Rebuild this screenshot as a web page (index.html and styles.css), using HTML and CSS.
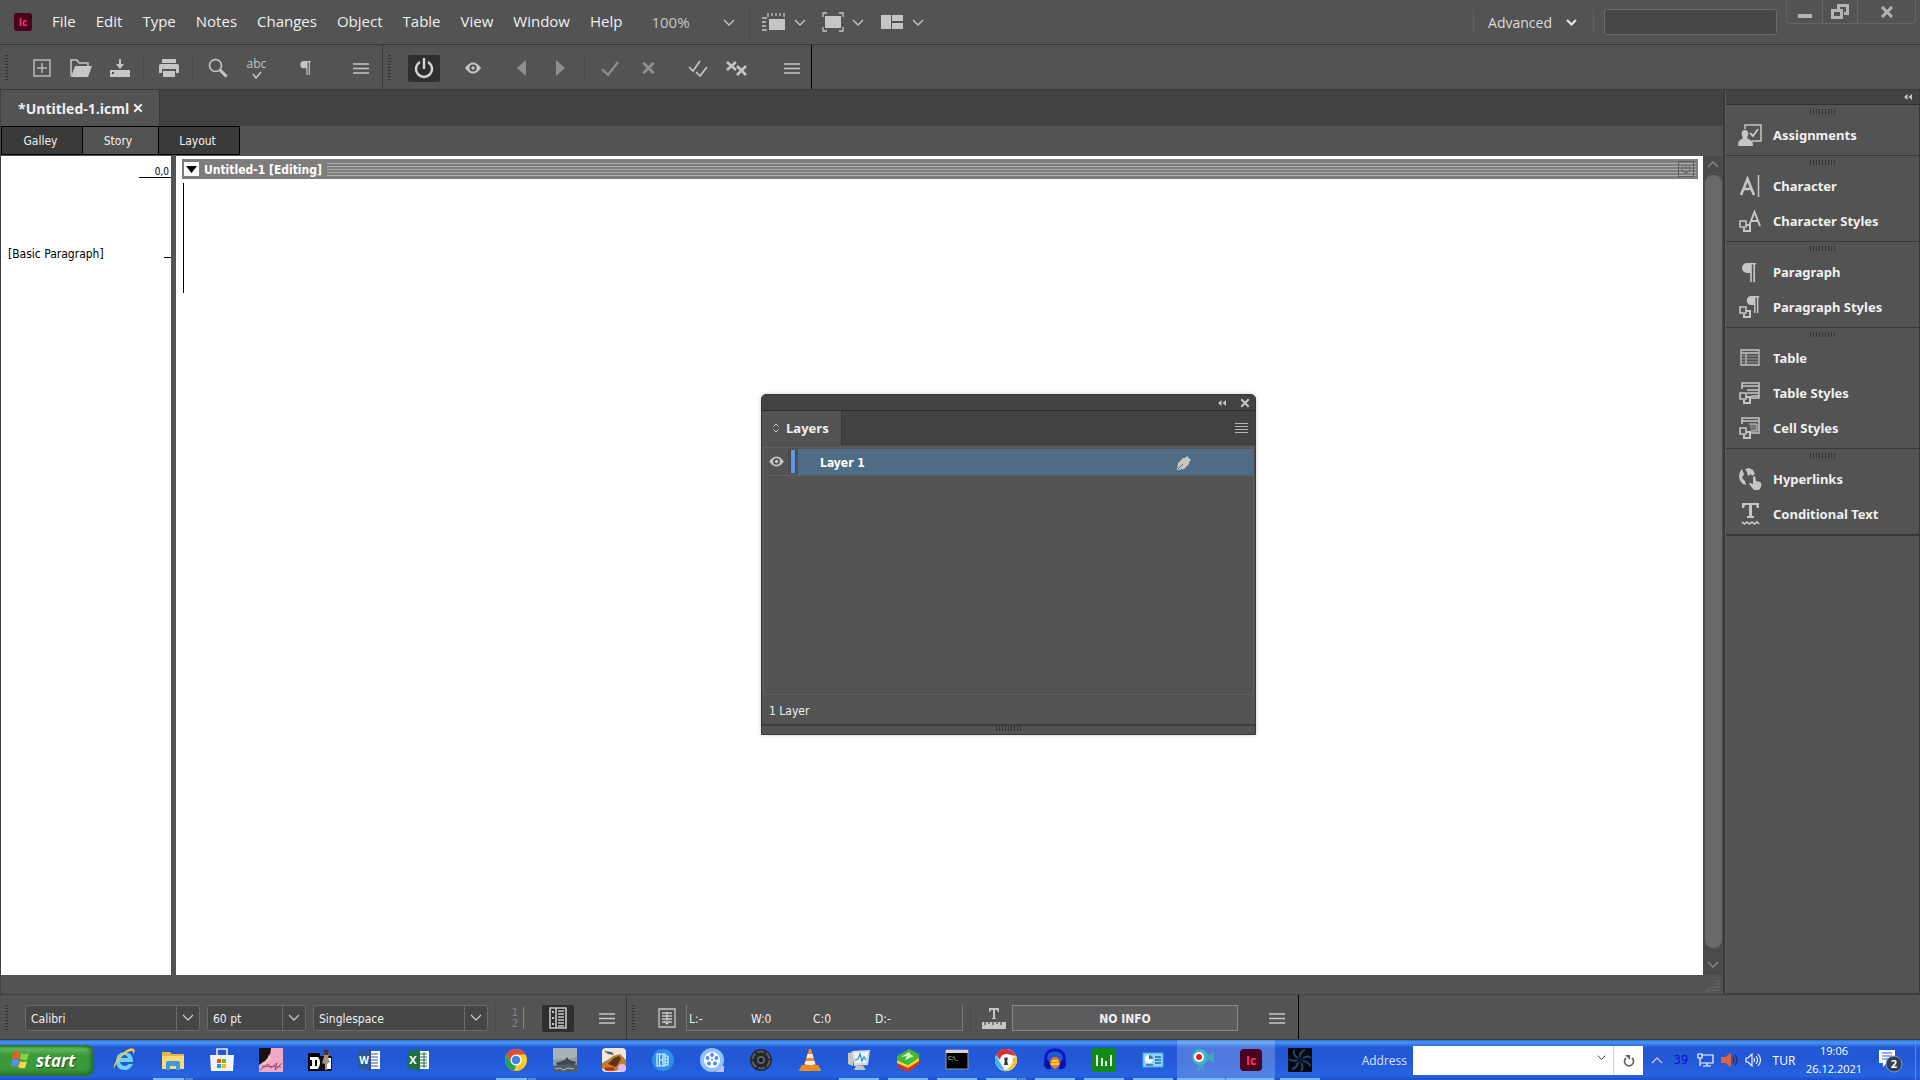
FILE: index.html
```html
<!DOCTYPE html>
<html lang="en">
<head>
    <meta charset="UTF-8">
    <meta name="viewport" content="width=device-width, initial-scale=1.0">
    <title>*Untitled-1.icml</title>
    <link rel="stylesheet" href="styles.css">
</head>
<body>
    <!-- shared icons -->
    <svg class="defs" aria-hidden="true">
        <symbol id="chevron" viewBox="0 0 12 7"><path d="M1 1l5 5 5-5" fill="none" stroke="currentColor" stroke-width="1.3"/></symbol>
        <symbol id="lines" viewBox="0 0 16 11"><path d="M0 1h16M0 5.500h16M0 10h16" fill="none" stroke="currentColor" stroke-width="1.6"/></symbol>
        <symbol id="collapse" viewBox="0 0 8 6"><path d="M3.500 0v6L0 3zM8 0v6L4.500 3z" fill="currentColor"/></symbol>
        <symbol id="cross" viewBox="0 0 12 12"><path d="M1.500 1.500l9 9M10.500 1.500l-9 9" fill="none" stroke="currentColor" stroke-width="2.4"/></symbol>
        <symbol id="eye" viewBox="0 0 16 12"><path d="M0 6Q8-5 16 6 8 17 0 6z" fill="currentColor"/><circle cx="8" cy="6" r="3.600" fill="#484848"/><circle cx="8" cy="6" r="1.800" fill="currentColor"/></symbol>
        <symbol id="squares" viewBox="0 0 12 12"><path d="M4 5h7v6H5V8" fill="none" stroke="currentColor" stroke-width="2"/><path d="M1 1h6v6H1z" fill="#535353" stroke="currentColor" stroke-width="1.6"/></symbol>
        <symbol id="pilcrow" viewBox="0 0 14 19"><path d="M5 0h9v1.600h-1V19h-1.600V1.600H9.800V19H8.200v-9H5A5 5 0 0 1 5 0z" fill="currentColor"/></symbol>
    </svg>

    <header class="menu-bar">
        <svg class="app-logo" width="18" height="18" viewBox="0 0 18 18"><rect width="18" height="18" rx="3" fill="#49021f"/><text x="9" y="13" text-anchor="middle" font-size="10" font-weight="700" fill="#ff3366">Ic</text></svg>
        <nav class="menus">
            <button>File</button>
            <button>Edit</button>
            <button>Type</button>
            <button>Notes</button>
            <button>Changes</button>
            <button>Object</button>
            <button>Table</button>
            <button>View</button>
            <button>Window</button>
            <button>Help</button>
        </nav>
        <div class="combo zoom">
            <select aria-label="Zoom level"><option>100%</option></select>
            <svg class="chevron"><use href="#chevron"/></svg>
        </div>
        <button class="view-menu" aria-label="View options">
            <svg width="24" height="20" viewBox="0 0 24 20"><path d="M7 7h16v11H7z" fill="#c6c6c6"/><path d="M6 5V1M10 4V1M14 4V1M18 4V1M22 5V1M0 6h5M0 10h4M0 14h4M0 18h5" stroke="#c6c6c6" stroke-width="1.300"/></svg>
            <svg class="chevron"><use href="#chevron"/></svg>
        </button>
        <button class="view-menu" aria-label="Screen mode">
            <svg width="22" height="20" viewBox="0 0 22 20"><path d="M3 4h16v12H3z" fill="#c6c6c6"/><path d="M1 5V1h4M17 1h4v4M21 15v4h-4M5 19H1v-4" fill="none" stroke="#c6c6c6" stroke-width="1.300"/></svg>
            <svg class="chevron"><use href="#chevron"/></svg>
        </button>
        <button class="view-menu" aria-label="Arrange documents">
            <svg width="24" height="16" viewBox="0 0 24 16"><path d="M1 1h10v14H1zM12 1h11v6H12zM12 9h11v6H12z" fill="#c6c6c6"/></svg>
            <svg class="chevron"><use href="#chevron"/></svg>
        </button>
        <button class="workspace">Advanced
            <svg width="11" height="7" viewBox="0 0 11 7"><path d="M1 1l4.500 4.500L10 1" fill="none" stroke="#e8e8e8" stroke-width="2"/></svg>
        </button>
        <input class="help-search" type="search" aria-label="Search help">
        <div class="window-buttons">
            <button aria-label="Minimize"><svg width="14" height="16" viewBox="0 0 14 16"><path d="M0 10h14v4H0z" fill="#b4b4b4"/></svg></button>
            <button aria-label="Restore"><svg width="18" height="16" viewBox="0 0 18 16"><path d="M7.500 5V1.500h9v8H13" fill="none" stroke="#b4b4b4" stroke-width="3"/><path d="M1.500 6.500h9v7h-9z" fill="#535353" stroke="#b4b4b4" stroke-width="3"/></svg></button>
            <button aria-label="Close"><svg width="14" height="12" viewBox="0 0 14 12"><path d="M2 1l10 10M12 1L2 11" stroke="#b4b4b4" stroke-width="3"/></svg></button>
        </div>
    </header>

    <div class="toolbar">
        <div class="tool-group">
            <button aria-label="New"><svg width="18" height="18" viewBox="0 0 18 18"><path d="M1 1h16v16H1zM9 4v10M4 9h10" fill="none" stroke="#b9b9b9" stroke-width="1.500"/></svg></button>
            <button aria-label="Open"><svg width="22" height="18" viewBox="0 0 22 18"><path d="M1 17V1h6l2 3h9v3" fill="none" stroke="#c6c6c6" stroke-width="1.500"/><path d="M5 7h17l-4 11H1z" fill="#c6c6c6"/></svg></button>
            <button aria-label="Save"><svg width="22" height="18" viewBox="0 0 22 18"><path d="M10 0h2v5h3l-4 5-4-5h3zM1 11h20v7H1z" fill="#c6c6c6"/><path d="M3 14h2" stroke="#535353" stroke-width="2"/></svg></button>
            <span class="sep"></span>
            <button aria-label="Print"><svg width="20" height="18" viewBox="0 0 20 18"><path d="M3 0h14v4H3zM2 5h16a2 2 0 0 1 2 2v7h-3v-4H3v4H0V7a2 2 0 0 1 2-2zM4 12h12v6H4z" fill="#c6c6c6"/></svg></button>
            <span class="sep"></span>
            <button aria-label="Find"><svg width="20" height="20" viewBox="0 0 20 20"><circle cx="7.500" cy="7.500" r="6" fill="none" stroke="#c6c6c6" stroke-width="1.600"/><path d="M12 12l6.500 6.500" stroke="#c6c6c6" stroke-width="3"/></svg></button>
            <button class="spell" aria-label="Check spelling"><span>abc</span><svg width="10" height="8" viewBox="0 0 10 8"><path d="M1 3l3 4 5-6" fill="none" stroke="#c6c6c6" stroke-width="1.600"/></svg></button>
            <button class="push" aria-label="Show hidden characters"><svg width="11" height="14"><use href="#pilcrow"/></svg></button>
            <button class="push-more" aria-label="Toolbar menu"><svg width="16" height="11"><use href="#lines"/></svg></button>
        </div>
        <div class="tool-group changes">
            <button class="pressed" aria-label="Track changes"><svg width="20" height="22" viewBox="0 0 20 22"><path d="M6 5a8 8 0 1 0 8 0M10 1v11" fill="none" stroke="#d4d4d4" stroke-width="2.400"/></svg></button>
            <button class="push" aria-label="Show changes"><svg width="16" height="12"><use href="#eye"/></svg></button>
            <button class="push dim" aria-label="Previous change"><svg width="9" height="16" viewBox="0 0 9 16"><path d="M9 0v16L0 8z" fill="currentColor"/></svg></button>
            <button class="dim" aria-label="Next change"><svg width="9" height="16" viewBox="0 0 9 16"><path d="M0 0v16l9-8z" fill="currentColor"/></svg></button>
            <span class="sep"></span>
            <button class="dim" aria-label="Accept change"><svg width="18" height="15" viewBox="0 0 18 15"><path d="M1 8l6 6L17 1" fill="none" stroke="currentColor" stroke-width="2.200"/></svg></button>
            <button class="dim" aria-label="Reject change"><svg width="15" height="14"><use href="#cross"/></svg></button>
            <button class="push" aria-label="Accept all changes"><svg width="20" height="17" viewBox="0 0 20 17"><path d="M1 7l4 4 7-10M8 12l4 4 7-9" fill="none" stroke="#c6c6c6" stroke-width="1.700"/></svg></button>
            <button aria-label="Reject all changes"><svg width="22" height="15" viewBox="0 0 22 15"><path d="M1 1l9 8M10 1L1 9M11 5l9 9M20 5l-9 9" stroke="#c6c6c6" stroke-width="2.600"/></svg></button>
            <button class="push-more" aria-label="Toolbar menu"><svg width="16" height="11"><use href="#lines"/></svg></button>
        </div>
    </div>

    <main class="workspace-area">
        <section class="document">
            <div class="doc-tabs">
                <div class="doc-tab">*Untitled-1.icml <button aria-label="Close document"><svg width="10" height="10"><use href="#cross"/></svg></button></div>
            </div>
            <div class="view-tabs">
                <button>Galley</button>
                <button class="active">Story</button>
                <button>Layout</button>
            </div>
            <div class="editor">
                <aside class="gutter">
                    <div class="ruler">0,0</div>
                    <div class="style-name">[Basic Paragraph]<span class="tick"></span></div>
                </aside>
                <article class="story">
                    <div class="story-bar">
                        <button class="fold" aria-label="Collapse story"><svg width="11" height="7" viewBox="0 0 11 7"><path d="M0 0h11L5.500 7z"/></svg></button>
                        <h2>Untitled-1 [Editing]</h2>
                        <div class="stripes"><svg width="16" height="16" viewBox="0 0 16 16"><path d="M.5.5h15v15H.5zM5 5a4 4 0 1 0 6 0M8 4v4" fill="none" stroke="#5c5c5c"/></svg></div>
                    </div>
                    <div class="caret"></div>
                </article>
                <div class="scrollbar">
                    <svg class="chevron up"><use href="#chevron"/></svg>
                    <div class="thumb"></div>
                    <svg class="chevron"><use href="#chevron"/></svg>
                </div>
            </div>
            <div class="doc-status">
                <svg width="14" height="13" viewBox="0 0 14 13"><path d="M12.500 1v12M9.500 4v9M6.500 7v6M3.500 9v4M.5 11v2" stroke="#666" stroke-width="2" stroke-dasharray="2 1"/></svg>
            </div>

            <section class="layers-window">
                <div class="layers-title">
                    <button aria-label="Collapse"><svg width="8" height="6"><use href="#collapse"/></svg></button>
                    <button aria-label="Close"><svg width="10" height="10"><use href="#cross"/></svg></button>
                </div>
                <div class="layers-tabs">
                    <button class="layers-tab"><svg width="6" height="10" viewBox="0 0 6 10"><path d="M.5 3.500L3 1l2.500 2.500M.5 6.500L3 9l2.500-2.500" fill="none" stroke="#c6c6c6"/></svg>Layers</button>
                    <button class="layers-menu" aria-label="Panel menu"><svg width="13" height="10" viewBox="0 0 13 10"><path d="M0 .5h13M0 3.500h13M0 6.500h13M0 9.500h13" stroke="#b4b4b4" stroke-width="1.200"/></svg></button>
                </div>
                <div class="layers-list">
                    <div class="layer">
                        <button aria-label="Toggle visibility"><svg width="15" height="11"><use href="#eye"/></svg></button>
                        <span class="layer-color"></span>
                        <div class="layer-name">Layer 1
                            <svg width="14" height="14" viewBox="0 0 14 14"><path d="M0 14l1-7 5-5 2 0 2-2 4 4-2 2 0 2-5 5z" fill="#c6c6c6"/><path d="M1 13l5-5" stroke="#506b84"/></svg>
                        </div>
                    </div>
                </div>
                <div class="layers-count">1 Layer</div>
                <div class="layers-resize"><span class="grip"></span></div>
            </section>
        </section>

        <aside class="dock">
            <div class="dock-top"><button aria-label="Expand panels"><svg width="8" height="6"><use href="#collapse"/></svg></button></div>
            <div class="dock-group">
                <span class="grip"></span>
                <button><svg width="24" height="22" viewBox="0 0 24 22"><path d="M7 5V1h16v16h-9" fill="none" stroke="#c6c6c6" stroke-width="1.500"/><path d="M12 9l3 3 5-7" fill="none" stroke="#c6c6c6" stroke-width="1.800"/><path d="M7 6c4 0 4 5 2 8l5 3q1 2 1 5H0q0-4 1-5l4-3C3 11 3 6 7 6z" fill="#c6c6c6"/></svg>Assignments</button>
            </div>
            <div class="dock-group">
                <span class="grip"></span>
                <button><svg width="24" height="22" viewBox="0 0 24 22"><path d="M3 20L9.500 4 16 20M5.500 14h8" fill="none" stroke="#c6c6c6" stroke-width="2.600"/><path d="M20.500 0v22" stroke="#c6c6c6" stroke-width="1.500"/></svg>Character</button>
                <button><svg width="24" height="22" viewBox="0 0 24 22"><path d="M11 16l5.500-14L22 16M13 11h7" fill="none" stroke="#c6c6c6" stroke-width="2"/><use href="#squares" x="1" y="10" width="12" height="12"/></svg>Character Styles</button>
            </div>
            <div class="dock-group">
                <span class="grip"></span>
                <button><svg width="24" height="22" viewBox="0 0 24 22"><use href="#pilcrow" x="4" y="2" width="14" height="19"/></svg>Paragraph</button>
                <button><svg width="24" height="22" viewBox="0 0 24 22"><use href="#pilcrow" x="8" y="0" width="14" height="17"/><use href="#squares" x="1" y="10" width="12" height="12"/></svg>Paragraph Styles</button>
            </div>
            <div class="dock-group">
                <span class="grip"></span>
                <button><svg width="24" height="22" viewBox="0 0 24 22"><path d="M3 3h18v15H3zM3 6h18M8 6v12" fill="none" stroke="#c6c6c6" stroke-width="1.300"/><path d="M4 9h16M4 12h16M4 15h16" stroke="#969696"/></svg>Table</button>
                <button><svg width="24" height="22" viewBox="0 0 24 22"><path d="M4 7V1h17v15h-8M4 4h17M9 8h12M9 11h12M13 14h8" fill="none" stroke="#c6c6c6" stroke-width="1.500"/><use href="#squares" x="1" y="10" width="12" height="12"/></svg>Table Styles</button>
                <button><svg width="24" height="22" viewBox="0 0 24 22"><path d="M4 7V1h17v15h-8M4 4h17" fill="none" stroke="#c6c6c6" stroke-width="1.500"/><path d="M11 7h8v7h-6" fill="#777" stroke="#c6c6c6"/><use href="#squares" x="1" y="10" width="12" height="12"/></svg>Cell Styles</button>
            </div>
            <div class="dock-group">
                <span class="grip"></span>
                <button><svg width="24" height="22" viewBox="0 0 24 22"><path d="M4 1C0 5 0 12 5 16l3 1-1-4-3-3 2-4zM7 1l4-1 4 2 2 4-3 2-1-2-3 2-1-4z" fill="#c6c6c6"/><path d="M15 9l2-1 1 5 4 1q2 1 1 5l-2 3h-5l-5-6 1-1 3 1z" fill="#c6c6c6"/></svg>Hyperlinks</button>
                <button><svg width="24" height="24" viewBox="0 0 24 24"><path d="M4 1h17v5h-2l-1-3h-4v11h2v2H9v-2h2V3H7L6 6H4z" fill="#c6c6c6"/><path d="M4 20l2.500 2L9 20l2.500 2 2.500-2 2.500 2 2.500-2 2 2" fill="none" stroke="#c6c6c6" stroke-width="1.700"/></svg>Conditional Text</button>
            </div>
        </aside>
    </main>

    <footer class="toolbar bottom">
        <div class="tool-group">
            <div class="combo wide"><select aria-label="Font"><option>Calibri</option></select><svg class="chevron"><use href="#chevron"/></svg></div>
            <div class="combo"><select aria-label="Font size"><option>60 pt</option></select><svg class="chevron"><use href="#chevron"/></svg></div>
            <div class="combo wide"><select aria-label="Line spacing"><option>Singlespace</option></select><svg class="chevron"><use href="#chevron"/></svg></div>
            <span class="sep"></span>
            <button class="line-numbers" aria-label="Line numbers"><span>1<br>2</span></button>
            <button class="pressed" aria-label="Show style names"><svg width="18" height="22" viewBox="0 0 18 22"><path d="M1 1h16v20H1zM7 1v20" fill="none" stroke="#c6c6c6" stroke-width="1.600"/><path d="M3 5h2M3 11h2M3 17h2" stroke="#c6c6c6" stroke-width="2"/><path d="M9 4h6M9 7h6M9 10h6M9 13h6M9 16h6M9 19h6" stroke="#c6c6c6" stroke-width="1.500"/></svg></button>
            <button class="push" aria-label="Toolbar menu"><svg width="16" height="11"><use href="#lines"/></svg></button>
        </div>
        <div class="tool-group info">
            <button aria-label="Copyfit info"><svg width="18" height="20" viewBox="0 0 18 20"><path d="M1 1h16v18H1zM4 5h10M4 8h10M4 11h10M4 14h3M11 14h3M9 4v12M6 13l3 3 3-3" fill="none" stroke="#c6c6c6" stroke-width="1.300"/></svg></button>
            <div class="counts"><span>L:-</span><span>W:0</span><span>C:0</span><span>D:-</span></div>
            <span class="sep"></span>
            <button aria-label="Copyfit ruler"><svg width="24" height="21" viewBox="0 0 24 21"><path d="M7 0h10v4h-1l-1-2h-2v8h1v1h-4v-1h1V2H9L8 4H7zM0 14h24v7H0z" fill="#c6c6c6"/><path d="M3 14v3M7 14v2M11 14v3M15 14v2M19 14v3" stroke="#535353" stroke-width="1.300"/></svg></button>
            <output class="no-info">NO INFO</output>
            <button class="last" aria-label="Toolbar menu"><svg width="16" height="11"><use href="#lines"/></svg></button>
        </div>
    </footer>

    <div class="taskbar">
        <button class="start"><svg width="20" height="20" viewBox="0 0 20 20"><path d="M2 3q4-3 7-1L8 9Q5 7 1 9z" fill="#f1592a"/><path d="M10 3q4 2 8 0l-2 7q-4 1-7-1z" fill="#8ccf3f"/><path d="M1 10q3-2 7 0l-2 7q-3-2-6 0z" fill="#5b8df0"/><path d="M9 11q3 2 7 0l-2 7q-4 1-7-1z" fill="#ffd34a"/></svg>start</button>
        <div class="apps">
            <button aria-label="Internet Explorer"><svg viewBox="0 0 24 24"><path d="M21 14H8q1 4 5 4 2 0 4-2h4q-3 6-8 6-9 0-9-9 0-8 8-9 9 0 9 10zM8 10h8q-1-3-4-3t-4 3z" fill="#6fd1fb"/><path d="M3 23Q-1 18 8 8T22 1q2 2-1 6 1-4-1-4-6 0-13 9T3 23z" fill="#f6c937"/></svg></button>
            <button class="running stacked" aria-label="File Explorer"><svg viewBox="0 0 24 24"><path d="M1 4h8l2 2h12v15H1z" fill="#e9b544"/><path d="M1 8h22v13H1z" fill="#fcd978"/><path d="M5 22v-7q0-2 2-2h10q2 0 2 2v7h-4v-4H9v4z" fill="#3b9ade"/></svg></button>
            <button aria-label="Store"><svg viewBox="0 0 24 24"><path d="M7 7V1h10v6" fill="none" stroke="#e8eefc" stroke-width="1.600"/><path d="M0 7h24l-1 16H1z" fill="#f4f4f4"/><path d="M7 11h4v4H7z" fill="#f25022"/><path d="M12 11h4v4h-4z" fill="#7fba00"/><path d="M7 16h4v4H7z" fill="#00a4ef"/><path d="M12 16h4v4h-4z" fill="#ffb900"/></svg></button>
            <button aria-label="Photo editor"><svg viewBox="0 0 24 24"><path d="M0 0h24v24H0z" fill="#eda9c6"/><path d="M0 0h12l-1 7-5 6-6 4z" fill="#1a1113"/><path d="M10 6l-2 7-4 1-3 4 6-2 5-6z" fill="#f4c6b0"/><path d="M1 22l8-6 3 4 6-5-2 7 7-7M3 18l19 1" fill="none" stroke="#9d4a70"/></svg></button>
            <button aria-label="Game"><svg viewBox="0 0 24 24"><path d="M0 5h12v18H0z" fill="#000"/><path d="M12 8h12v15H12z" fill="#111"/><path d="M2 9h8q4 5 0 12H2v-3h2v-6H2zM7 12v6h2v-6z" fill="#fff"/><path d="M19 10h4v11h-4z" fill="#fff"/><path d="M15 3l4-2 2 4-1 5 2 4-3 2v6h-2v-6l-3-1 2-6z" fill="#b19084"/><path d="M15 3q2-4 6 0l-1 4h-4z" fill="#4b332d"/></svg></button>
            <button aria-label="Word"><svg viewBox="0 0 24 24"><path d="M12 3h11v18H12z" fill="#fff"/><path d="M13 6h8M13 9h8M13 12h8M13 15h8M13 18h8" stroke="#2b579a"/><path d="M1 4l13-3v22L1 20z" fill="#2b579a"/><text x="7" y="16" text-anchor="middle" font-size="10" font-weight="700" fill="#fff">W</text></svg></button>
            <button aria-label="Excel"><svg viewBox="0 0 24 24"><path d="M12 3h11v18H12z" fill="#fff"/><path d="M13 6h8M13 9h8M13 12h8M13 15h8M13 18h8M18 4v16" stroke="#217346"/><path d="M1 4l13-3v22L1 20z" fill="#1e7145"/><text x="7" y="16" text-anchor="middle" font-size="11" font-weight="700" fill="#fff">X</text></svg></button>
            <span class="app-gap"></span>
            <button class="running stacked" aria-label="Chrome"><svg viewBox="0 0 24 24"><circle cx="12" cy="12" r="11" fill="#fbcb2b"/><path d="M2.500 6.500A11 11 0 0 1 21.500 6.500H12L7 14z" fill="#de4a3a"/><path d="M2.500 6.500l5.500 9 4 2-2 5.500A11 11 0 0 1 2.500 6.500z" fill="#2aa053"/><circle cx="12" cy="12" r="5.500" fill="#fff"/><circle cx="12" cy="12" r="4.300" fill="#4284f3"/></svg></button>
            <button aria-label="Warship game"><svg viewBox="0 0 24 24"><path d="M0 0h24v24H0z" fill="#8c9ba5"/><path d="M0 0h24v9q-12 3-24 2z" fill="#a7b2b8"/><path d="M3 15l9-3 2-3 2 3 7 2-2 4H5z" fill="#41464a"/><path d="M0 18q12-3 24-1v7H0z" fill="#4b5d69"/><path d="M2 21l5-1 3 2 5-2 6 1" stroke="#b0bcc4" fill="none"/></svg></button>
            <button aria-label="War game"><svg viewBox="0 0 24 24"><rect width="24" height="24" rx="4" fill="#f1e7d8"/><path d="M0 15q8-4 11-7l7-2 6 6v7q-8 5-19 4L0 20z" fill="#c27a35"/><path d="M6 16l6-6 5-2 2 3-5 8z" fill="#5b3414"/><path d="M2 3l8 1 2 3-6-1z" fill="#526070"/><path d="M3 21h9" stroke="#c32917" stroke-width="3"/><circle cx="20" cy="20" r="4" fill="#e0b8f4"/></svg></button>
            <button aria-label="Movies"><svg viewBox="0 0 24 24"><circle cx="12" cy="12" r="11" fill="#2c8fe9"/><path d="M6 6h8v12H6zM8.500 6v12M12 6v12M8.500 12H12M14 8h3v9h-3M14 11h3M14 14h3" fill="none" stroke="#e6f4ff" stroke-width="1.200"/></svg></button>
            <button aria-label="Video player"><svg viewBox="0 0 24 24"><path d="M16 18h8v6h-8z" fill="#bcc1ff"/><circle cx="12" cy="12" r="12" fill="#8fc1fc"/><circle cx="12" cy="12" r="8" fill="#fff"/><g fill="#4d8cf0"><circle cx="12" cy="7" r="2"/><circle cx="7.500" cy="10" r="2"/><circle cx="16.500" cy="10" r="2"/><circle cx="9" cy="15.500" r="2"/><circle cx="15" cy="15.500" r="2"/><circle cx="12" cy="11.500" r="1"/></g></svg></button>
            <button aria-label="Sound"><svg viewBox="0 0 24 24"><circle cx="12" cy="12" r="11" fill="#23272d"/><circle cx="12" cy="12" r="8.500" fill="none" stroke="#555b63" stroke-width="2" stroke-dasharray="7 2"/><circle cx="12" cy="12" r="4" fill="#596069"/><circle cx="12" cy="12" r="2" fill="#111"/></svg></button>
            <button aria-label="VLC"><svg viewBox="0 0 24 24"><path d="M4 17h16l3 5q0 1-1 1H2q-1 0-1-1z" fill="#f08a1c"/><path d="M11 1h2l5 17q-6 3-12 0z" fill="#f48b1d"/><path d="M9.500 6h5l1 4h-7zM7.500 13h9l1 3q-5 2-11 0z" fill="#eee"/></svg></button>
            <button class="running" aria-label="System monitor"><svg viewBox="0 0 24 24"><path d="M1 5l5-1v14l-5-2z" fill="#c9c7bd"/><path d="M5 3l18-1-2 15-14 1z" fill="#d9dadb"/><path d="M7 5l14-1-2 11H8z" fill="#e8f7ff"/><path d="M8 12l3-1 2-5 2 7 2-4 2 3" fill="none" stroke="#2f8fc3" stroke-width="1.300"/><path d="M9 18h7l3 4H7z" fill="#c4c5c7"/></svg></button>
            <button class="running" aria-label="BlueStacks"><svg viewBox="0 0 24 24"><path d="M1 15l11 5 11-8v4l-11 8-11-5z" fill="#d92f27"/><path d="M1 12l11 5 11-8v4l-11 7-11-5z" fill="#f6d52b"/><path d="M1 8L13 1l10 5v4l-11 7-11-5z" fill="#45b933"/><path d="M5 9l8-5 2 3 3 1-9 4 2-4z" fill="#d8f5cf"/></svg></button>
            <button class="running" aria-label="Command prompt"><svg viewBox="0 0 24 24"><path d="M1 2h22v19H1z" fill="#000" stroke="#9b9b9b"/><path d="M1 2h22v3H1z" fill="#d6d6d6"/><text x="3" y="12" font-size="6" fill="#fff">C:\_</text></svg></button>
            <button class="running stacked" aria-label="Browser"><svg viewBox="0 0 24 24"><circle cx="12" cy="12" r="11" fill="#f2f2f2"/><path d="M2 7A11 11 0 0 1 22 8l-9-2-7 6z" fill="#d93030"/><path d="M22 8q3 8-4 13-4 3-8 2 9-3 9-13z" fill="#f2c230"/><path d="M2 7q-3 9 3 13l6 3-6-10z" fill="#46b1ed"/><circle cx="12" cy="12" r="6" fill="#fff"/><path d="M11 12h2l1 5h-4z" fill="#333"/><circle cx="12" cy="11" r="1.800" fill="#333"/></svg></button>
            <button class="running" aria-label="Audacity"><svg viewBox="0 0 24 24"><path d="M7 17q0-8 5-8t5 8l-5 4z" fill="#f77d14"/><path d="M8 16h8M9 13h6" stroke="#ffdb3a" stroke-width="2"/><path d="M3 15Q1 2 12 2t9 13" fill="none" stroke="#0c14c8" stroke-width="3"/><path d="M2 12q5-2 6 9-6 1-7-4zM22 12q-5-2-6 9 6 1 7-4z" fill="#0a0fae"/></svg></button>
            <button class="running" aria-label="Equalizer"><svg viewBox="0 0 24 24"><rect width="24" height="24" rx="3" fill="#118a1a"/><path d="M5 7v11M10 10v8M14 13v5M19 7v11" stroke="#e7ffe7" stroke-width="2"/></svg></button>
            <button class="running" aria-label="Control panel"><svg viewBox="0 0 24 24"><path d="M2 5h20v14H2z" fill="#8fd4fa" stroke="#48a7df"/><circle cx="8" cy="11" r="4" fill="#f3fbff"/><path d="M8 11V7a4 4 0 0 1 4 4z" fill="#2683c9"/><path d="M14 9h6M14 12h6M14 15h6M5 17h7" stroke="#236ba5" stroke-width="1.500"/></svg></button>
            <button class="running active" aria-label="Screen recorder"><svg viewBox="0 0 24 24"><circle cx="10" cy="9" r="8" fill="#41b5c2"/><path d="M16 8l8-4v11l-8-4zM9 17h3l3 6h-2l-2-4-2 4H7z" fill="#41a8bd"/><circle cx="9" cy="9" r="5" fill="#fff"/><circle cx="9" cy="9" r="3" fill="#e2231a"/></svg></button>
            <button class="running active" aria-label="InCopy"><svg viewBox="0 0 24 24"><rect x="1" y="1" width="22" height="22" rx="4" fill="#49021f"/><text x="12" y="17" text-anchor="middle" font-size="12" font-weight="700" fill="#ff3366">Ic</text></svg></button>
            <button class="running" aria-label="Fan control"><svg viewBox="0 0 24 24"><path d="M0 0h24v24H0z" fill="#05080e"/><g fill="none" stroke="#23436e" stroke-width="2"><path d="M12 9q0-6 5-7M15 10q5-3 8 0M15 13q6 1 7 5M13 15q3 4 0 8M10 14q-1 6-6 7M9 12q-5 2-8-1M10 10Q5 8 6 2"/></g><circle cx="12" cy="12" r="3" fill="#101a29"/></svg></button>
        </div>
        <label class="address-label" for="address">Address</label>
        <div class="address">
            <input id="address" type="text">
            <svg class="chevron"><use href="#chevron"/></svg>
            <button aria-label="Refresh"><svg width="12" height="13" viewBox="0 0 12 13"><path d="M3 4a4.500 4.500 0 1 0 6 0" fill="none" stroke="#666" stroke-width="1.700"/><path d="M2 1h5v5z" fill="#666"/></svg></button>
        </div>
        <div class="tray">
            <button aria-label="Show hidden icons"><svg class="chevron up"><use href="#chevron"/></svg></button>
            <span class="temp">39</span>
            <button aria-label="Network"><svg width="17" height="14" viewBox="0 0 17 14"><path d="M5 2h11v8H4M10 10v3M6 13h8M1 1h4v4H1zM3 5v8" fill="none" stroke="#fff" stroke-width="1.200"/></svg></button>
            <button aria-label="Audio manager"><svg width="17" height="14" viewBox="0 0 17 14"><path d="M0 4h4l6-4v14l-6-4H0z" fill="#e2633b"/><path d="M12 4q2 3 0 6M14 2q4 5 0 10" fill="none" stroke="#342c51" stroke-width="1.300"/></svg></button>
            <button aria-label="Volume"><svg width="17" height="14" viewBox="0 0 17 14"><path d="M1 5h2l4-4v12L3 9H1zM9 5q1 2 0 4M11 3q3 4 0 8M13 1q5 6 0 12" fill="none" stroke="#fff" stroke-width="1.100"/></svg></button>
            <button class="lang">TUR</button>
            <button class="clock">19:06<br>26.12.2021</button>
            <button class="notices" aria-label="Notifications"><svg width="26" height="26" viewBox="0 0 26 26"><path d="M2 3h16v13h-8l-4 4v-4H2z" fill="#fff"/><path d="M5 6h10M5 9h10M5 12h7" stroke="#245edb"/><circle cx="17" cy="17" r="8" fill="#2f3e5c" stroke="#8796b8"/><text x="17" y="21" text-anchor="middle" font-size="11" font-weight="700" fill="#fff">2</text></svg></button>
        </div>
    </div>
</body>
</html>
```
FILE: styles.css
```css
* {
    box-sizing: border-box;
}
body {
    margin: 0;
    height: 100vh;
    display: flex;
    flex-direction: column;
    background-color: #535353;
    color: #f0f0f0;
    font-family: "DejaVu Sans Condensed", "DejaVu Sans", sans-serif;
    font-size: 12px;
    overflow: hidden;
}
button, select, input {
    font: inherit;
    color: inherit;
    background: none;
    border: none;
    border-radius: 0;
    padding: 0;
    margin: 0;
}
button {
    display: flex;
    align-items: center;
    justify-content: center;
    color: #c6c6c6;
}
svg {
    display: block;
    flex: none;
}
svg text {
    font-family: "Open Sans", sans-serif;
}
.defs {
    position: absolute;
    width: 0;
    height: 0;
}
.chevron {
    width: 12px;
    height: 7px;
    color: #c6c6c6;
}
.chevron.up {
    transform: rotate(180deg);
}

/* menu bar */
.menu-bar {
    display: flex;
    align-items: center;
    height: 45px;
    flex: none;
    padding-left: 14px;
    border-bottom: 1px solid #383838;
    font-family: "Open Sans", sans-serif;
    font-size: 15px;
}
.menus {
    display: flex;
    gap: 20px;
    margin-left: 20px;
    padding-bottom: 2px;
}
.menus button {
    color: #f0f0f0;
}
.combo {
    position: relative;
    width: 99px;
    height: 26px;
}
.combo select {
    appearance: none;
    width: 100%;
    height: 100%;
    padding: 2px 30px 0 5px;
    border: 1px solid #6b6b6b;
    border-radius: 3px;
    background: linear-gradient(#6b6b6b, #6b6b6b) right 22px top / 1px 100% no-repeat #464646;
}
.combo .chevron {
    position: absolute;
    right: 6px;
    top: 9px;
    pointer-events: none;
}
.combo.wide {
    width: 175px;
}
.combo.zoom {
    width: 104px;
    height: 36px;
    margin: 0 12px 0 24px;
    border-right: 1px solid #4a4a4a;
    color: #c6c6c6;
}
.combo.zoom select {
    padding-top: 0;
    border: none;
    background: none;
}
.combo.zoom .chevron {
    right: 14px;
    top: 15px;
}
.view-menu {
    gap: 8px;
    margin-right: 16px;
}
.workspace {
    gap: 14px;
    height: 24px;
    margin-left: auto;
    padding: 0 16px 0 14px;
    border: solid #626262;
    border-width: 0 1px;
    font-size: 14px;
    color: #dcdcdc;
}
.help-search {
    width: 173px;
    height: 26px;
    margin: 0 9px 0 10px;
    border: 1px solid #6b6b6b;
    border-radius: 3px;
    background-color: #464646;
}
.window-buttons {
    display: flex;
    align-self: flex-start;
    height: 24px;
    margin-right: 4px;
    border: 1px solid #656565;
    border-top: none;
    border-radius: 0 0 4px 4px;
}
.window-buttons button {
    width: 35px;
}
.window-buttons button + button {
    border-left: 1px solid #656565;
}
.window-buttons button:last-child {
    width: 58px;
}

/* tool bars */
.toolbar {
    display: flex;
    height: 45px;
    flex: none;
    border-bottom: 1px solid #383838;
}
.tool-group {
    position: relative;
    display: flex;
    align-items: center;
    padding: 2px 2px 0 22px;
    border-right: 1px solid #383838;
}
.tool-group::before {
    content: "";
    position: absolute;
    left: 5px;
    top: 10px;
    width: 3px;
    height: 25px;
    background: repeating-linear-gradient(#333 0 1px, transparent 1px 3px);
}
.tool-group button {
    width: 39px;
    height: 30px;
}
.tool-group .sep {
    width: 1px;
    height: 30px;
    margin: 0 5px 0 4px;
    background-color: #4b4b4b;
}
.tool-group .push {
    margin-left: 10px;
}
.tool-group .push-more {
    margin-left: 16px;
}
.tool-group .dim {
    color: #8e8e8e;
}
.tool-group .pressed {
    width: 32px;
    margin: 0 3px;
    height: 27px;
    border-radius: 2px;
    background-color: #2f2f2f;
}
.tool-group .spell {
    flex-direction: column;
    line-height: 14px;
    font-family: "Open Sans", sans-serif;
}
.tool-group.changes {
    padding-right: 0;
    border-right-color: #000;
}
.bottom {
    height: 46px;
    border-top: 1px solid #404040;
}
.bottom .tool-group {
    padding: 2px 0 0 25px;
}
.bottom .combo {
    margin-right: 7px;
}
.bottom .tool-group .sep {
    margin-left: 0;
}
.bottom .line-numbers {
    width: 34px;
    margin-right: 4px;
    font-size: 11px;
    line-height: 11px;
    color: #858585;
}
.line-numbers span {
    padding-right: 5px;
    border-right: 1px solid #858585;
}
.bottom .info {
    padding-left: 20px;
    border-right-color: #000;
}
.counts {
    display: flex;
    width: 277px;
    height: 26px;
    padding: 2px 0 0 2px;
    align-items: center;
    border: 1px solid #7a7a7a;
    border-top: none;
}
.counts span {
    width: 62px;
}
.bottom .info .sep {
    margin: 0 3px 0 7px;
}
.no-info {
    width: 226px;
    height: 26px;
    margin-left: -1px;
    border: 1px solid #8a8a8a;
    background-color: #5c5c5c;
    font-weight: bold;
    text-align: center;
    line-height: 27px;
}
.bottom .last {
    margin: 0 2px 0 19px;
}

/* document */
.workspace-area {
    display: flex;
    flex: 1;
    min-height: 0;
}
.document {
    position: relative;
    display: flex;
    flex-direction: column;
    flex: 1;
    border-right: 2px solid #3a3a3a;
    border-left: 1px solid #424242;
}
.doc-tabs {
    display: flex;
    height: 36px;
    background-color: #424242;
}
.doc-tab {
    display: flex;
    align-items: center;
    gap: 4px;
    padding: 0 16px 0 17px;
    border-right: 1px solid #383838;
    background-color: #535353;
    font-family: "Open Sans", sans-serif;
    font-size: 14px;
    font-weight: bold;
}
.doc-tab button {
    color: #f0f0f0;
}
.view-tabs {
    display: flex;
    height: 30px;
    padding-bottom: 1px;
}
.view-tabs button {
    width: 82px;
    padding-right: 3px;
    border: 1px solid #000;
    background-color: #3a3a3a;
    color: #f0f0f0;
}
.view-tabs .active {
    width: 75px;
    padding-right: 5px;
    border-width: 1px 0;
    background-color: #535353;
}
.editor {
    display: flex;
    flex: 1;
}
.gutter {
    width: 170px;
    background-color: #fff;
    color: #000;
}
.ruler {
    width: 32px;
    height: 22px;
    margin-left: auto;
    padding: 10px 2px 0 0;
    border-bottom: 1px solid #000;
    font-size: 10px;
    line-height: 12px;
    text-align: right;
}
.style-name {
    display: flex;
    justify-content: space-between;
    align-items: center;
    height: 20px;
    margin-top: 66px;
    padding-left: 7px;
}
.tick {
    width: 7px;
    height: 1px;
    margin-top: 7px;
    background-color: #000;
}
.story {
    flex: 1;
    margin-left: 5px;
    padding: 3px 5px 0 6px;
    background-color: #fff;
}
.story-bar {
    display: flex;
    align-items: center;
    height: 20px;
    padding: 0 2px;
    background-color: #7d7d7d;
}
.fold {
    width: 15px;
    height: 14px;
    background-color: #fff;
}
.story-bar h2 {
    margin: 0 5px;
    padding-top: 2px;
    font-size: 12px;
    color: #fff;
}
.stripes {
    display: flex;
    flex: 1;
    height: 16px;
    justify-content: flex-end;
    padding-right: 2px;
    background: repeating-linear-gradient(#7d7d7d 0 2px, #adadad 2px 3px);
}
.caret {
    width: 1px;
    height: 110px;
    margin: 4px 0 0 1px;
    background-color: #000;
}
.scrollbar {
    display: flex;
    flex-direction: column;
    align-items: center;
    justify-content: space-between;
    width: 20px;
    padding: 5px 0 7px;
    background-color: #4a4a4a;
}
.scrollbar .chevron {
    color: #8a8a8a;
}
.thumb {
    flex: 1;
    width: 17px;
    margin: 7px 0 13px;
    border-radius: 8px;
    background-color: #696969;
}
.doc-status {
    display: flex;
    justify-content: flex-end;
    height: 19px;
    padding: 4px 3px 0 0;
}

/* floating layers window */
.layers-window {
    position: absolute;
    left: 760px;
    top: 304px;
    width: 495px;
    height: 341px;
    display: flex;
    flex-direction: column;
    border: 1px solid #383838;
    border-radius: 5px 5px 0 0;
    background-color: #535353;
    box-shadow: 0 0 4px rgba(0,0,0,0.2);
}
.layers-title {
    display: flex;
    justify-content: flex-end;
    gap: 14px;
    height: 16px;
    padding-right: 5px;
    border-bottom: 1px solid #2e2e2e;
    border-radius: 4px 4px 0 0;
    background-color: #424242;
}
.layers-tabs {
    display: flex;
    justify-content: space-between;
    height: 34px;
    border-bottom: 1px solid #383838;
    background-color: #424242;
}
.layers-tab {
    gap: 7px;
    margin-bottom: -1px;
    padding: 0 12px 0 11px;
    border-right: 1px solid #383838;
    background-color: #535353;
    font-family: "Open Sans", sans-serif;
    font-size: 13px;
    font-weight: bold;
    color: #f0f0f0;
}
.layers-menu {
    margin-right: 7px;
}
.layers-list {
    flex: 1;
    margin: 2px 1px 0;
    border: 1px solid #5e5e5e;
}
.layer {
    display: flex;
    height: 28px;
    border-bottom: 1px solid #5e5e5e;
}
.layer button {
    width: 25px;
    border-right: 1px solid #4a4a4a;
}
.layer-color {
    width: 6px;
    margin: 2px 2px 2px 1px;
    border: solid #444;
    border-width: 0 1px;
    background-color: #5c99ea;
}
.layer-name {
    display: flex;
    flex: 1;
    align-items: center;
    justify-content: space-between;
    margin-top: 1px;
    padding: 2px 62px 0 22px;
    background-color: #506b84;
    font-weight: bold;
    color: #fff;
}
.layers-count {
    height: 29px;
    padding: 2px 0 0 7px;
    line-height: 28px;
}
.layers-resize {
    height: 10px;
    border-top: 2px solid #3d3d3d;
}
.grip {
    display: block;
    width: 25px;
    height: 5px;
    margin: 0 auto;
    background: repeating-linear-gradient(90deg, #333 0 1px, transparent 1px 3px);
}

/* panel dock */
.dock {
    width: 195px;
    border-left: 1px solid #5a5a5a;
    border-right: 1px solid #383838;
    border-bottom: 1px solid #383838;
}
.dock-top {
    display: flex;
    justify-content: flex-end;
    height: 15px;
    padding-right: 7px;
    border-bottom: 1px solid #2e2e2e;
    background-color: #424242;
}
.dock-group {
    padding: 4px 0 3px;
    border-bottom: 1px solid #383838;
}
.dock-group:last-child {
    border-bottom-width: 2px;
}
.dock-group .grip {
    margin-bottom: 3px;
}
.dock-group button {
    width: 100%;
    height: 35px;
    justify-content: flex-start;
    gap: 11px;
    padding-left: 12px;
    font-family: "Noto Sans", sans-serif;
    font-size: 13px;
    font-weight: bold;
    color: #f0f0f0;
}
.dock-group svg {
    color: #c6c6c6;
}

/* task bar */
.taskbar {
    display: flex;
    align-items: center;
    height: 40px;
    flex: none;
    background: linear-gradient(#2a6ad8 0, #4694f0 2px, #3d86ea 4px, #2359d6 7px, #2257d5 18px, #2663e2 36px, #1f4fc4 40px);
    font-family: "Open Sans", sans-serif;
}
.start {
    width: 94px;
    height: 31px;
    margin-right: 5px;
    padding-right: 8px;
    gap: 5px;
    border-radius: 0 8px 8px 0;
    background: linear-gradient(#2f7a2f 0, #5fb95c 4px, #3b9a3a 10px, #3a983a 24px, #2b762b 31px);
    box-shadow: inset -3px 0 4px #256b28;
    font-size: 17px;
    font-style: italic;
    font-weight: bold;
    color: #fff;
    text-shadow: 1px 1px 1px #1b4d1c;
}
.apps {
    display: flex;
    align-self: stretch;
}
.apps button, .app-gap {
    width: 49px;
    position: relative;
}
.apps svg {
    width: 24px;
    height: 24px;
}
.apps .running::after {
    content: "";
    position: absolute;
    left: 5px;
    bottom: 0;
    width: 40px;
    height: 2px;
    background-color: #76b9f7;
}
.apps .stacked::after {
    background: linear-gradient(90deg, #76b9f7 31px, #2d559c 31px 32px, #4d8acb 32px);
}
.apps .active {
    background-color: rgba(255,255,255,0.2);
}
.apps .active::after {
    left: 0;
    width: 48px;
}
.address-label {
    margin-left: auto;
    margin-right: 6px;
    color: #dbe5fb;
}
.address {
    display: flex;
    align-items: center;
    width: 230px;
    height: 29px;
    background-color: #fff;
    color: #000;
}
.address input {
    flex: 1;
    min-width: 0;
    height: 100%;
    padding-left: 6px;
}
.address .chevron {
    width: 9px;
    margin: 0 7px 6px 0;
    color: #333;
}
.address button {
    width: 30px;
    height: 100%;
    border-left: 1px solid #d5d5d5;
}
.tray {
    display: flex;
    align-items: center;
    align-self: stretch;
    margin-left: 2px;
    margin-right: 4px;
    border-right: 1px solid #5b86df;
}
.tray button, .temp {
    width: 24px;
    color: #fff;
}
.temp {
    color: #0a10d0;
    font-family: "DejaVu Sans Mono", monospace;
    text-align: center;
}
.tray .lang {
    width: 38px;
}
.tray .clock {
    width: 62px;
    margin-right: 12px;
    font-size: 11px;
    line-height: 18px;
}
.tray .notices {
    width: 26px;
    margin-right: 12px;
}
```
